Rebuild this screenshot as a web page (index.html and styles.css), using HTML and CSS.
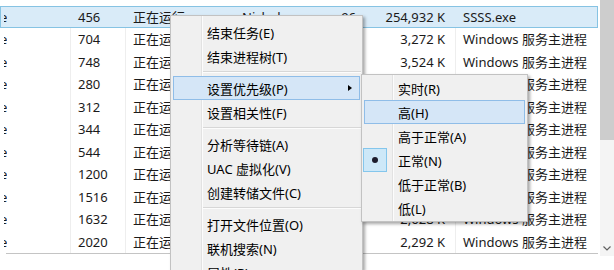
FILE: index.html
```html
<!DOCTYPE html>
<html lang="zh-CN">
<head>
    <meta charset="UTF-8">
    <title>任务管理器 - 详细信息</title>
    <link rel="stylesheet" href="styles.css">
</head>
<body>
    <div class="window">
        <div class="list">
            <div class="row selected">
                <span class="c name"><span class="clip">e</span></span>
                <span class="c pid">456</span>
                <span class="c status">正在运行</span>
                <span class="c user">Nicholas</span>
                <span class="c cpu">96</span>
                <span class="c mem">254,932 K</span>
                <span class="c desc">SSSS.exe</span>
            </div>
            <div class="row">
                <span class="c name"><span class="clip">e</span></span>
                <span class="c pid">704</span>
                <span class="c status">正在运行</span>
                <span class="c user">SYSTEM</span>
                <span class="c cpu">00</span>
                <span class="c mem">3,272 K</span>
                <span class="c desc">Windows 服务主进程</span>
            </div>
            <div class="row">
                <span class="c name"><span class="clip">e</span></span>
                <span class="c pid">748</span>
                <span class="c status">正在运行</span>
                <span class="c user">NETWORK...</span>
                <span class="c cpu">00</span>
                <span class="c mem">3,524 K</span>
                <span class="c desc">Windows 服务主进程</span>
            </div>
            <div class="row">
                <span class="c name"><span class="clip">e</span></span>
                <span class="c pid">280</span>
                <span class="c status">正在运行</span>
                <span class="c user">LOCAL SE...</span>
                <span class="c cpu">00</span>
                <span class="c mem">10,188 K</span>
                <span class="c desc">Windows 服务主进程</span>
            </div>
            <div class="row">
                <span class="c name"><span class="clip">e</span></span>
                <span class="c pid">312</span>
                <span class="c status">正在运行</span>
                <span class="c user">SYSTEM</span>
                <span class="c cpu">00</span>
                <span class="c mem">21,604 K</span>
                <span class="c desc">Windows 服务主进程</span>
            </div>
            <div class="row">
                <span class="c name"><span class="clip">e</span></span>
                <span class="c pid">344</span>
                <span class="c status">正在运行</span>
                <span class="c user">LOCAL SE...</span>
                <span class="c cpu">00</span>
                <span class="c mem">6,420 K</span>
                <span class="c desc">Windows 服务主进程</span>
            </div>
            <div class="row">
                <span class="c name"><span class="clip">e</span></span>
                <span class="c pid">544</span>
                <span class="c status">正在运行</span>
                <span class="c user">SYSTEM</span>
                <span class="c cpu">00</span>
                <span class="c mem">5,036 K</span>
                <span class="c desc">Windows 服务主进程</span>
            </div>
            <div class="row">
                <span class="c name"><span class="clip">e</span></span>
                <span class="c pid">1200</span>
                <span class="c status">正在运行</span>
                <span class="c user">NETWORK...</span>
                <span class="c cpu">00</span>
                <span class="c mem">4,812 K</span>
                <span class="c desc">Windows 服务主进程</span>
            </div>
            <div class="row">
                <span class="c name"><span class="clip">e</span></span>
                <span class="c pid">1516</span>
                <span class="c status">正在运行</span>
                <span class="c user">LOCAL SE...</span>
                <span class="c cpu">00</span>
                <span class="c mem">2,956 K</span>
                <span class="c desc">Windows 服务主进程</span>
            </div>
            <div class="row">
                <span class="c name"><span class="clip">e</span></span>
                <span class="c pid">1632</span>
                <span class="c status">正在运行</span>
                <span class="c user">SYSTEM</span>
                <span class="c cpu">00</span>
                <span class="c mem">2,628 K</span>
                <span class="c desc">Windows 服务主进程</span>
            </div>
            <div class="row">
                <span class="c name"><span class="clip">e</span></span>
                <span class="c pid">2020</span>
                <span class="c status">正在运行</span>
                <span class="c user">LOCAL SE...</span>
                <span class="c cpu">00</span>
                <span class="c mem">2,292 K</span>
                <span class="c desc">Windows 服务主进程</span>
            </div>
            <div class="list-end"></div>
        </div>

        <div class="scrollbar">
            <div class="thumb"></div>
            <div class="track"></div>
            <div class="down">
                <svg width="8" height="5" viewBox="0 0 8 5"><polyline points="0.5,0.5 4,4 7.5,0.5" fill="none" stroke="#606060" stroke-width="1.2"/></svg>
            </div>
        </div>
    </div>

    <!-- context menu -->
    <div class="menu main-menu">
        <div class="item"><span class="mark"></span>结束任务(E)</div>
        <div class="item"><span class="mark"></span>结束进程树(T)</div>
        <div class="sep"></div>
        <div class="item active"><span class="mark"></span>设置优先级(P)<span class="arrow"></span></div>
        <div class="item"><span class="mark"></span>设置相关性(F)</div>
        <div class="sep"></div>
        <div class="item"><span class="mark"></span>分析等待链(A)</div>
        <div class="item"><span class="mark"></span>UAC 虚拟化(V)</div>
        <div class="item"><span class="mark"></span>创建转储文件(C)</div>
        <div class="sep"></div>
        <div class="item"><span class="mark"></span>打开文件位置(O)</div>
        <div class="item"><span class="mark"></span>联机搜索(N)</div>
        <div class="item"><span class="mark"></span>属性(R)</div>
    </div>

    <!-- priority submenu -->
    <div class="menu sub-menu">
        <div class="item"><span class="mark"></span>实时(R)</div>
        <div class="item active"><span class="mark"></span>高(H)</div>
        <div class="item"><span class="mark"></span>高于正常(A)</div>
        <div class="item"><span class="mark"><span class="bullet"></span></span>正常(N)</div>
        <div class="item"><span class="mark"></span>低于正常(B)</div>
        <div class="item"><span class="mark"></span>低(L)</div>
    </div>
</body>
</html>
```

FILE: styles.css
```css
html, body {
    margin: 0;
    padding: 0;
    background: #fff;
}

body {
    width: 614px;
    height: 270px;
    overflow: hidden;
    position: relative;
    font-family: "Noto Sans", "Noto Sans CJK SC", sans-serif;
    font-size: 13px;
    color: #1a1a1a;
}

.window {
    display: flex;
    gap: 2px;
}

/* process list */
.list {
    width: 598px;
    padding-top: 5.5px;
}

.row {
    display: grid;
    grid-template-columns: 70px 55px 110px 65px 61px 94px 143px;
    height: 22.5px;
    line-height: 22.5px;
    white-space: nowrap;
}

.row.selected {
    background: #d9ebf8;
    box-shadow: inset 0 0 0 1px #86c3e3;
}

.c {
    overflow: hidden;
    border-left: 1px solid #eeeeee;
    box-sizing: border-box;
}

.row.selected .c {
    border-left-color: transparent;
}

.name {
    border-left: none;
}

.clip {
    display: inline-block;
    width: 3px;
    margin-left: 4px;
    overflow: hidden;
    text-indent: -4px;
    vertical-align: top;
}

.pid {
    padding-left: 7px;
}

.status {
    padding-left: 7px;
}

.user {
    padding-left: 6px;
}

.cpu {
    text-align: right;
    padding-right: 5px;
}

.mem {
    text-align: right;
    padding-right: 10px;
}

.desc {
    padding-left: 7px;
}

.list-end {
    height: 0;
    margin-left: 6px;
    border-top: 1px solid #c4c4c4;
}

/* scrollbar */
.scrollbar {
    width: 14px;
    height: 256px;
    display: flex;
    flex-direction: column;
}

.thumb {
    height: 140px;
    background: #cdcdcd;
}

.track {
    flex: 1;
    background: #f4f4f4;
}

.down {
    height: 16px;
    background: #f4f4f4;
    display: flex;
    align-items: center;
    justify-content: center;
}

/* menus */
.menu {
    position: absolute;
    box-sizing: border-box;
    background: #f0f0f0;
    border: 1px solid #c2c2c2;
    box-shadow: 2px 2px 3px rgba(0, 0, 0, 0.35);
}

.menu::before {
    content: "";
    position: absolute;
    top: 0;
    bottom: 0;
    left: 30px;
    width: 1px;
    background: #e2e2e2;
    border-right: 1px solid #fcfcfc;
}

.main-menu {
    left: 170px;
    top: 15px;
    width: 193px;
    height: 255px;
    overflow: hidden;
    padding-top: 4px;
    border-bottom: none;
}

.sub-menu {
    left: 361px;
    top: 74px;
    width: 167px;
    padding: 1px 0;
}

.item {
    position: relative;
    display: flex;
    align-items: center;
    height: 24px;
    margin: 0 2px;
    border: 1px solid transparent;
    box-sizing: border-box;
    color: #000;
    white-space: nowrap;
}

.item.active {
    background: #d5e6f7;
    border-color: #8fbde8;
}

.mark {
    flex: none;
    width: 33px;
    height: 22px;
    display: flex;
    align-items: center;
}

.bullet {
    width: 24px;
    height: 24px;
    margin-left: -2px;
    box-sizing: border-box;
    background: #cde8f8;
    border: 1px solid #84c6ec;
    display: flex;
    align-items: center;
    justify-content: center;
}

.bullet::after {
    content: "";
    width: 6px;
    height: 6px;
    border-radius: 50%;
    background: #1c1c2c;
}

.arrow {
    margin-left: auto;
    margin-right: 7px;
    width: 0;
    height: 0;
    border-top: 3.5px solid transparent;
    border-bottom: 3.5px solid transparent;
    border-left: 4px solid #000;
}

.sep {
    height: 8px;
    margin-left: 32px;
    margin-right: 1px;
    position: relative;
}

.sep::after {
    content: "";
    position: absolute;
    left: 0;
    right: 0;
    top: 3px;
    height: 1px;
    background: #d7d7d7;
    border-bottom: 1px solid #fcfcfc;
}
```
